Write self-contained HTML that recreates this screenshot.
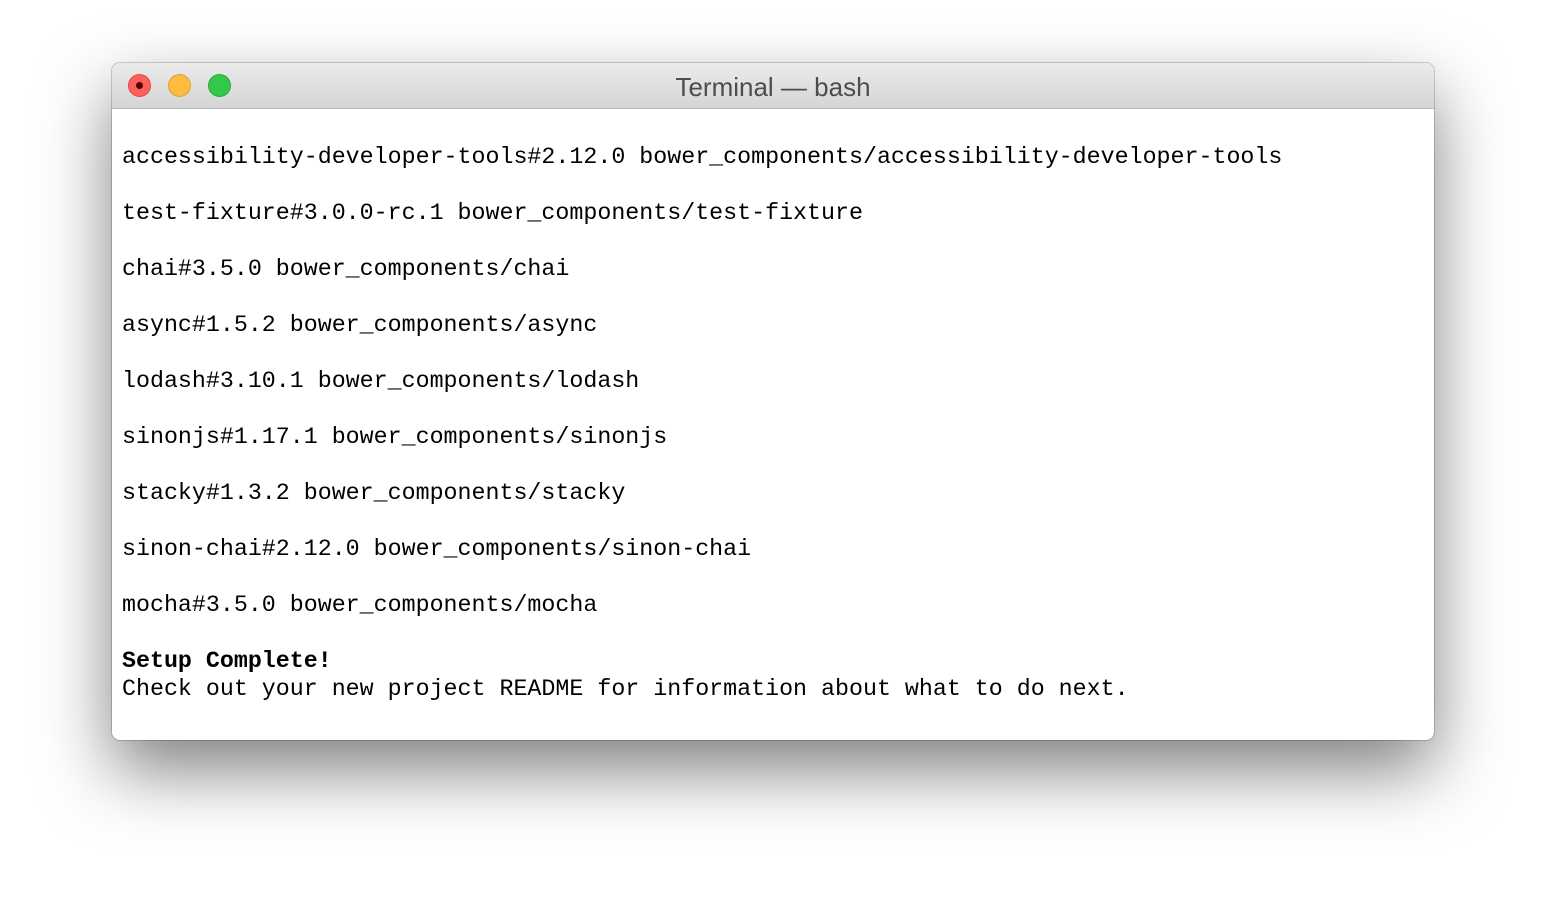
<!DOCTYPE html>
<html><head><style>
body{margin:0;width:1546px;height:900px;background:#fff;position:relative;overflow:hidden}
.win{position:absolute;left:112px;top:63px;width:1322px;height:677px;border-radius:8px;background:#fff;box-shadow:0 30px 70px rgba(0,0,0,.5),0 0 0 1px rgba(0,0,0,.18);overflow:hidden}
.tb{height:45px;background:linear-gradient(#ebebeb,#d5d5d5);border-bottom:1px solid #b5b5b5;position:relative}
.tb .t{position:absolute;left:0;right:0;top:9px;text-align:center;font:26px "Liberation Sans",sans-serif;color:#4d4d4d}
.d{position:absolute;top:11px;width:23px;height:23px;border-radius:50%;box-sizing:border-box}
.l{position:absolute;left:10px;font:23.3px/28px "Liberation Mono",monospace;color:#000;white-space:pre}
</style></head><body>
<div class="win">
<div class="tb">
<div class="d" style="left:16px;background:#fc605c;border:1px solid #de4a45"><div style="position:absolute;left:7px;top:7px;width:7px;height:7px;border-radius:50%;background:#4d0000"></div></div>
<div class="d" style="left:56px;background:#fdbc40;border:1px solid #dea235"></div>
<div class="d" style="left:96px;background:#34c84a;border:1px solid #27aa35"></div>
<div class="t">Terminal — bash</div>
</div>
<div class="l" style="top:80px">accessibility-developer-tools#2.12.0 bower_components/accessibility-developer-tools</div>
<div class="l" style="top:136px">test-fixture#3.0.0-rc.1 bower_components/test-fixture</div>
<div class="l" style="top:192px">chai#3.5.0 bower_components/chai</div>
<div class="l" style="top:248px">async#1.5.2 bower_components/async</div>
<div class="l" style="top:304px">lodash#3.10.1 bower_components/lodash</div>
<div class="l" style="top:360px">sinonjs#1.17.1 bower_components/sinonjs</div>
<div class="l" style="top:416px">stacky#1.3.2 bower_components/stacky</div>
<div class="l" style="top:472px">sinon-chai#2.12.0 bower_components/sinon-chai</div>
<div class="l" style="top:528px">mocha#3.5.0 bower_components/mocha</div>
<div class="l" style="top:584px;font-weight:bold">Setup Complete!</div>
<div class="l" style="top:612px">Check out your new project README for information about what to do next.</div>
</div>
</body></html>
